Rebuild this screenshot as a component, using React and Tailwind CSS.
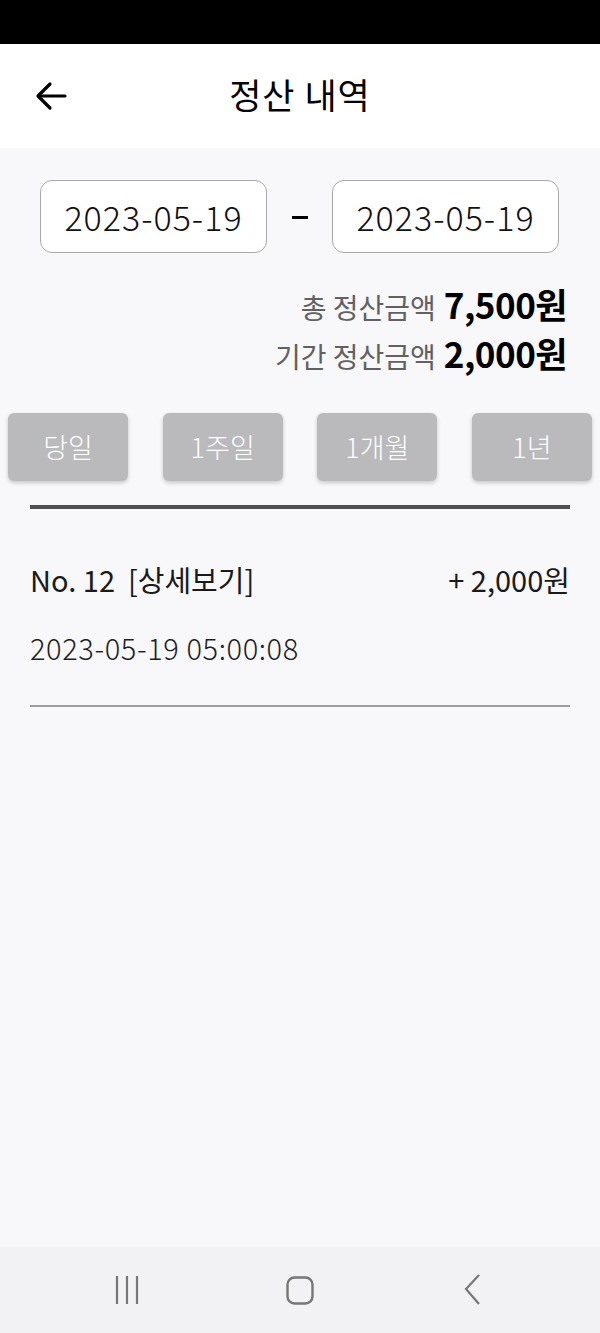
import React from 'react';

export default function App() {
  const periods = ['당일', '1주일', '1개월', '1년'];

  return (
    <div className="w-[600px] h-[1333px] flex flex-col bg-[#f8f7fa] text-black font-['Noto_Sans_CJK_KR',sans-serif]">
      {/* Status bar */}
      <div className="h-[44px] bg-black shrink-0" />

      {/* Header */}
      <header className="h-[104px] bg-white flex items-center relative shrink-0">
        <button className="absolute left-[34px] top-[36px] text-black">
          <svg width="36" height="32" viewBox="0 0 36 32" fill="none" stroke="currentColor" strokeWidth="3.2" strokeLinecap="round" strokeLinejoin="round">
            <path d="M31 16H5" />
            <path d="M16 4L4 16L16 28" />
          </svg>
        </button>
        <h1 className="w-full text-center text-[35px] font-normal tracking-[1px] mt-[-4px]">정산 내역</h1>
      </header>

      {/* Body */}
      <main className="flex-1 flex flex-col">
        {/* Date range */}
        <div className="flex items-center justify-between pl-[40px] pr-[41px] mt-[32px]">
          <div className="w-[227px] h-[73px] rounded-[12px] border border-[#a9a9ab] bg-white flex items-center justify-center text-[34px] font-light tracking-[1px] text-[#111]">
            2023-05-19
          </div>
          <div className="w-[16px] h-[3px] bg-black mt-[2px]" />
          <div className="w-[227px] h-[73px] rounded-[12px] border border-[#a9a9ab] bg-white flex items-center justify-center text-[34px] font-light tracking-[1px] text-[#111]">
            2023-05-19
          </div>
        </div>

        {/* Totals */}
        <div className="flex flex-col items-end pr-[33px] mt-[28px] leading-[45px]">
          <div className="flex items-baseline gap-[8px]">
            <span className="text-[28px] font-normal text-[#616161]">총 정산금액</span>
            <span className="text-[35px] font-bold tracking-[-0.5px]">7,500원</span>
          </div>
          <div className="flex items-baseline gap-[8px]">
            <span className="text-[28px] font-normal text-[#616161]">기간 정산금액</span>
            <span className="text-[35px] font-bold tracking-[-0.5px]">2,000원</span>
          </div>
        </div>

        {/* Period buttons */}
        <div className="flex justify-between px-[8px] mt-[34px]">
          {periods.map((p) => (
            <button
              key={p}
              className="w-[120px] h-[68px] rounded-[6px] bg-[#bab9bc] text-white text-[27px] font-light shadow-[0_2px_4px_rgba(0,0,0,0.2)] flex items-center justify-center"
            >
              {p}
            </button>
          ))}
        </div>

        <div className="mx-[30px] mt-[24px] h-[4px] bg-[#4f4f52]" />

        {/* List item */}
        <div className="mx-[30px] pt-[52px]">
          <div className="flex justify-between items-center text-[29px] font-normal text-[#1a1a1a] leading-[36px]">
            <span>No. 12&nbsp;&nbsp;[상세보기]</span>
            <span>+ 2,000원</span>
          </div>
          <div className="mt-[32px] text-[29px] font-light tracking-[0.6px] text-[#1f1f1f] leading-[36px]">2023-05-19 05:00:08</div>
          <div className="mt-[40px] h-[2px] bg-[#9c9c9e]" />
        </div>
      </main>

      {/* Navigation bar */}
      <nav className="h-[86px] bg-[#f2f1f4] flex items-center shrink-0">
        <div className="flex-1 flex justify-center pl-[40px]">
          <svg width="30" height="32" viewBox="0 0 30 32" fill="none" stroke="#777" strokeWidth="2.2">
            <path d="M5 2V30M15 2V30M25 2V30" />
          </svg>
        </div>
        <div className="flex-1 flex justify-center">
          <svg width="30" height="32" viewBox="0 0 30 32" fill="none" stroke="#777" strokeWidth="2.4">
            <rect x="2.5" y="3.5" width="25" height="26" rx="7" />
          </svg>
        </div>
        <div className="flex-1 flex justify-center pr-[40px]">
          <svg width="20" height="34" viewBox="0 0 20 34" fill="none" stroke="#777" strokeWidth="2.2">
            <path d="M16 2L3 16L16 31" />
          </svg>
        </div>
      </nav>
    </div>
  );
}
